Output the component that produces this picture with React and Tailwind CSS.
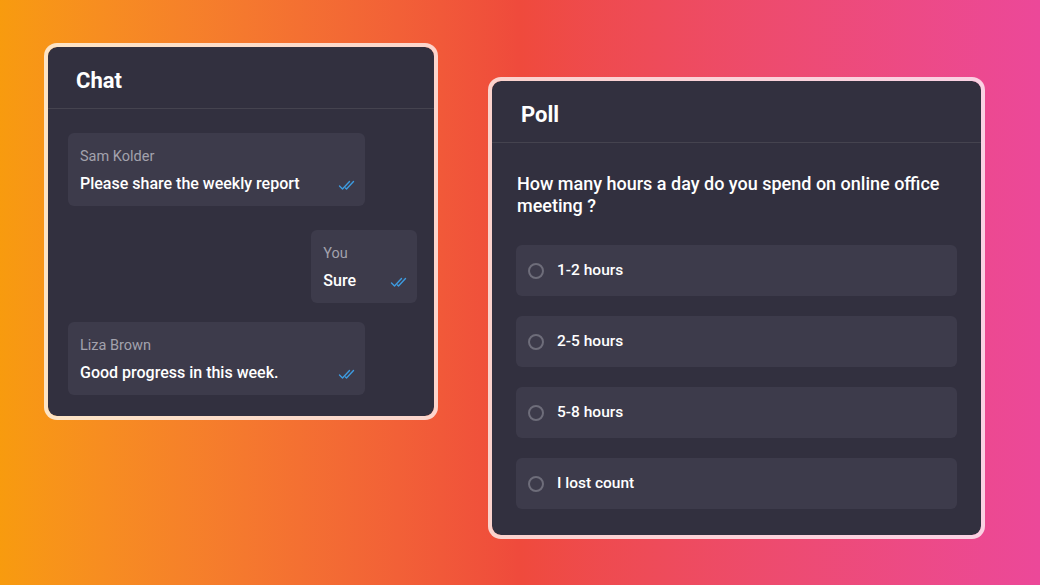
import React from "react";

function Checks() {
  return (
    <svg width="17" height="11" viewBox="0 0 17 11" fill="none" stroke="#3d9be0" strokeWidth="1.4" strokeLinecap="round" strokeLinejoin="round">
      <path d="M1.5 6 L4.5 9 L11.5 1.5" />
      <path d="M7.5 8 L8.5 9 L15.5 1.5" />
    </svg>
  );
}

function Bubble({ name, text, className = "", gap = "" }) {
  return (
    <div className={`rounded-[6px] bg-[#3d3b4b] pt-[14px] pb-[11px] pl-[12px] pr-[10px] ${className}`}>
      <div className="text-[14.5px] leading-[20px] text-[#a3a2ad]">{name}</div>
      <div className={`mt-[6px] flex items-center ${gap || "justify-between"}`}>
        <span className="text-[16px] leading-[22px] font-medium text-white">{text}</span>
        <span className="mt-[3px]"><Checks /></span>
      </div>
    </div>
  );
}

function Option({ label }) {
  return (
    <div className="flex h-[51px] items-center rounded-[6px] bg-[#3d3b4b] pl-[12px]">
      <div className="h-[16px] w-[16px] rounded-full border-2 border-[#6e6d7a]" />
      <span className="ml-[13px] text-[15.5px] font-medium text-white">{label}</span>
    </div>
  );
}

export default function App() {
  return (
    <div
      className="flex h-[585px] w-[1040px] items-start gap-[50px] bg-gradient-to-r from-[#f89b0e] via-[#ef4a3c] to-[#ec4899] pl-[44px] pt-[43px]"
      style={{ fontFamily: "Roboto, 'Liberation Sans', sans-serif" }}
    >
      <div className="w-[394px] rounded-[13px] border-4 border-white/75 bg-[#32303f] bg-clip-padding">
        <div className="flex h-[62px] items-center border-b border-[#45434f] pl-[28px] pt-[6px]">
          <span className="text-[22px] font-bold text-white">Chat</span>
        </div>
        <div className="flex flex-col pl-[20px] pr-[17px] pt-[24px] pb-[21px]">
          <Bubble name="Sam Kolder" text="Please share the weekly report" className="w-[297px]" />
          <Bubble name="You" text="Sure" className="mt-[24px] self-end" gap="gap-[34px]" />
          <Bubble name="Liza Brown" text="Good progress in this week." className="mt-[19px] w-[297px]" />
        </div>
      </div>

      <div className="mt-[34px] w-[497px] rounded-[13px] border-4 border-white/75 bg-[#32303f] bg-clip-padding">
        <div className="flex h-[62px] items-center border-b border-[#45434f] pl-[29px] pt-[6px]">
          <span className="text-[22px] font-bold text-white">Poll</span>
        </div>
        <div className="px-[24px] pt-[30px] pb-[26px]">
          <p className="pl-[1px] text-[18px] leading-[22px] font-medium text-white">
            How many hours a day do you spend on online office meeting ?
          </p>
          <div className="mt-[28px] flex flex-col gap-[20px]">
            <Option label="1-2 hours" />
            <Option label="2-5 hours" />
            <Option label="5-8 hours" />
            <Option label="I lost count" />
          </div>
        </div>
      </div>
    </div>
  );
}
